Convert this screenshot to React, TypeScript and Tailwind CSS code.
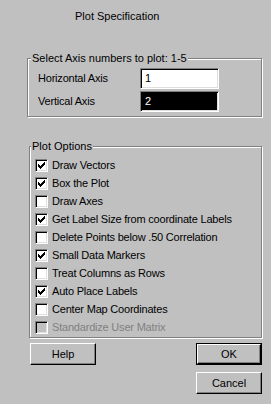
import React from 'react';

const options = [
  { label: 'Draw Vectors', checked: true },
  { label: 'Box the Plot', checked: true },
  { label: 'Draw Axes', checked: false },
  { label: 'Get Label Size from coordinate Labels', checked: true },
  { label: 'Delete Points below .50 Correlation', checked: false },
  { label: 'Small Data Markers', checked: true },
  { label: 'Treat Columns as Rows', checked: false },
  { label: 'Auto Place Labels', checked: true },
  { label: 'Center Map Coordinates', checked: false },
  { label: 'Standardize User Matrix', checked: false, disabled: true },
];

function CheckMark() {
  // classic 7x7 pixel tick
  return (
    <svg width="7" height="7" viewBox="0 0 7 7" shapeRendering="crispEdges" className="block">
      <path
        d="M6 0h1v1h-1zM5 1h2v1h-2zM0 2h1v1h-1zM4 2h3v1h-3zM0 3h2v1h-2zM3 3h3v1h-3zM0 4h5v1h-5zM1 5h3v1h-3zM2 6h1v1h-1z"
        fill="#000"
      />
    </svg>
  );
}

function CheckBox({ label, checked, disabled }: { label: string; checked: boolean; disabled?: boolean }) {
  return (
    <div className="flex items-center h-[18px]">
      <div
        className={`w-[13px] h-[13px] border border-t-[#808080] border-l-[#808080] border-r-white border-b-white shadow-[inset_1px_1px_0_#000,inset_-1px_-1px_0_#dfdfdf] flex items-center justify-center ${
          disabled ? 'bg-[#c0c0c0]' : 'bg-white'
        }`}
      >
        {checked && <CheckMark />}
      </div>
      <span className={`ml-[4px] tracking-[-0.2px] ${disabled ? 'text-[#808080]' : 'text-black'}`}>{label}</span>
    </div>
  );
}

function Button({ label, isDefault }: { label: string; isDefault?: boolean }) {
  return (
    <div className={isDefault ? 'border border-black' : ''}>
      <div
        className={`flex items-center justify-center bg-[#c0c0c0] border-t border-l border-t-white border-l-white border-r border-b border-r-black border-b-black shadow-[inset_-1px_-1px_0_#808080] ${
          isDefault ? 'w-[64px] h-[20px]' : 'w-[66px] h-[22px]'
        }`}
      >
        {label}
      </div>
    </div>
  );
}

function Field({ value, selected }: { value: string; selected?: boolean }) {
  return (
    <div
      className={`w-[79px] h-[21px] border border-t-[#808080] border-l-[#808080] border-r-white border-b-white shadow-[inset_1px_1px_0_#000,inset_-1px_-1px_0_#dfdfdf] flex items-center pl-[4px] ${
        selected ? 'bg-black text-white' : 'bg-white text-black'
      }`}
    >
      {value}
    </div>
  );
}

export default function App() {
  return (
    <div className="w-[271px] h-[404px] bg-[#c0c0c0] text-[11px] leading-[13px] text-black font-['Liberation_Sans',Arial,sans-serif] overflow-hidden">
      <div className="pt-[10px] pl-[75px]">Plot Specification</div>

      <div className="relative mt-[35px] ml-[27px] w-[235px] h-[59px] border border-[#808080] shadow-[inset_1px_1px_0_#fff,1px_1px_0_#fff] pt-[9px] pl-[10px]">
        <span className="absolute -top-[7px] left-[3px] bg-[#c0c0c0] px-[1px]">Select Axis numbers to plot: 1-5</span>
        <div className="flex flex-col gap-[2px]">
          <div className="flex items-center">
            <span className="w-[102px] tracking-[-0.2px]">Horizontal Axis</span>
            <Field value="1" />
          </div>
          <div className="flex items-center">
            <span className="w-[102px] tracking-[-0.2px]">Vertical Axis</span>
            <Field value="2" selected />
          </div>
        </div>
      </div>

      <div className="relative mt-[29px] ml-[29px] w-[233px] h-[192px] border border-[#808080] shadow-[inset_1px_1px_0_#fff,1px_1px_0_#fff] pt-[9px] pl-[5px]">
        <span className="absolute -top-[7px] left-[1px] bg-[#c0c0c0] px-[1px]">Plot Options</span>
        <div className="flex flex-col">
          {options.map((o) => (
            <CheckBox key={o.label} label={o.label} checked={o.checked} disabled={o.disabled} />
          ))}
        </div>
      </div>

      <div className="flex justify-between mt-[5px] ml-[30px] w-[232px]">
        <Button label="Help" />
        <div className="flex flex-col gap-[7px]">
          <Button label="OK" isDefault />
          <Button label="Cancel" />
        </div>
      </div>
    </div>
  );
}
